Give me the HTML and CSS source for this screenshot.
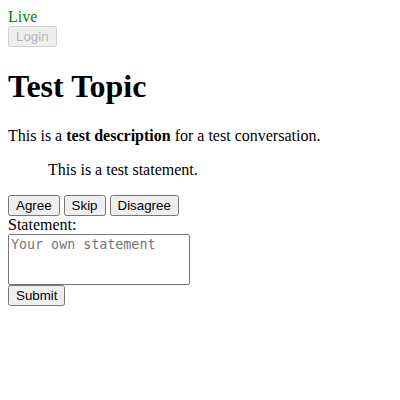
FILE: index.html
```html
<!DOCTYPE html>
<html>
<head>
<meta charset="utf-8">
<link rel="stylesheet" href="styles.css">
</head>
<body class="page">
<div class="status">
<span class="live">Live</span><br>
<button class="btn" disabled>Login</button>
</div>
<h1 class="title">Test Topic</h1>
<p class="desc">This is a <strong>test description</strong> for a test conversation.</p>
<blockquote class="statement">This is a test statement.</blockquote>
<form class="vote">
<button class="btn" type="button">Agree</button>
<button class="btn" type="button">Skip</button>
<button class="btn" type="button">Disagree</button><br>
<label class="label" for="own">Statement:</label>
<textarea class="input" id="own" placeholder="Your own statement" rows="3"></textarea>
<button class="btn" type="submit">Submit</button>
</form>
</body>
</html>
```

FILE: styles.css
```css
.page {
  margin: 8px;
  font-family: "Liberation Serif", serif;
  font-size: 16px;
}
.live {
  color: green;
}
.btn {
  font-family: "Liberation Sans", Arial, sans-serif;
  font-size: 13.333px;
}
.input {
  display: block;
  font-family: "DejaVu Sans Mono", monospace;
  font-size: 13.333px;
  width: 182px;
  box-sizing: border-box;
  resize: none;
}
.vote {
  margin: 0;
}
```
